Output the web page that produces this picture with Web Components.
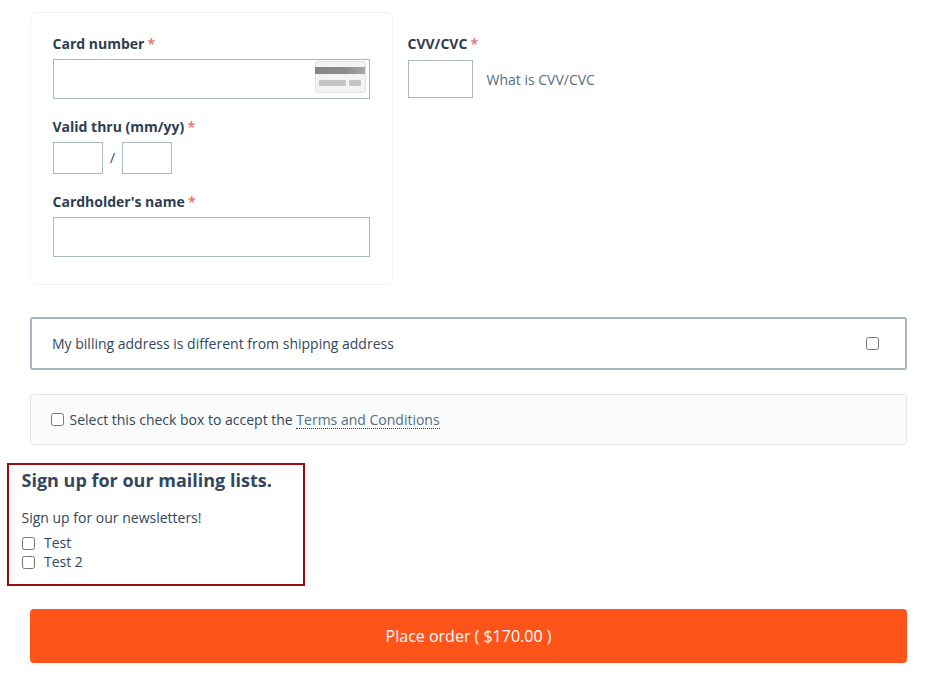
<!DOCTYPE html>
<html>
<head>
<meta charset="utf-8">
<title>Checkout</title>
<style>
  html, body { margin: 0; background: #fff; }
  body { font: 14px/20px "Open Sans", sans-serif; color: #33475b; overflow: hidden; height: 675px; }
  checkout-form { display: block; }
</style>
</head>
<body>
<checkout-form>
  <payment-fields></payment-fields>
  <billing-toggle>My billing address is different from shipping address</billing-toggle>
  <terms-box>Select this check box to accept the <a>Terms and Conditions</a></terms-box>
  <mailing-lists></mailing-lists>
  <order-button>Place order ( $170.00 )</order-button>
</checkout-form>

<script>
// small helper so every element has the same shadow setup
function shadow(el, html) {
	el.attachShadow({ mode: 'open' }).innerHTML = html;
}

class CheckoutForm extends HTMLElement {
	connectedCallback() {
		shadow(this, `
      <style>
        :host { display: block; width: 877px; padding: 12px 0 0 30px; }
      </style>
      <slot></slot>
    `);
	}
}

class FieldLabel extends HTMLElement {
	connectedCallback() {
		shadow(this, `
      <style>
        :host { display: block; font-size: 14px; line-height: 20px; font-weight: 700; color: #2f3d4d; margin-left: -0.5px; }
        span { color: #e2716a; font-weight: 600; margin-left: -0.5px; }
      </style>
      <slot></slot> <span>*</span>
    `);
	}
}

class PaymentFields extends HTMLElement {
	connectedCallback() {
		shadow(this, `
      <style>
        :host { display: flex; align-items: flex-start; }
        .card {
          box-sizing: border-box; width: 363px; height: 273px; padding: 21px 22px 0;
          border: 1px solid #f0f2f4; border-radius: 6px; background: #fff;
        }
        .side { margin: 22px 0 0 15px; }
        .box { display: block; box-sizing: border-box; border: 1px solid #aab8c2; background: #fff; }
        .number { width: 317px; height: 40px; margin-top: 5px; padding: 1px 3px 0 0; display: flex; justify-content: flex-end; }
        .name { width: 317px; height: 40px; margin-top: 5px; }
        .gap { height: 18px; }
        .dates { display: flex; align-items: center; margin-top: 5px; }
        .dates .box { width: 50px; height: 32px; }
        .dates i { font-style: normal; width: 19px; text-align: center; font-size: 14px; }
        .cvv { display: flex; align-items: center; margin-top: 6px; }
        .cvv .box { width: 65px; height: 38px; }
        .cvv span { margin: 2px 0 0 13.5px; font-size: 14px; color: #5a6d7c; }
        svg { display: block; }
      </style>
      <div class="card">
        <field-label>Card number</field-label>
        <div class="box number">
          <svg width="51" height="32" viewBox="0 0 51 32">
            <defs>
              <linearGradient id="stripe"><stop offset="0" stop-color="#858585"/><stop offset=".6" stop-color="#8c8c8c"/><stop offset="1" stop-color="#a8a8a8"/></linearGradient>
            </defs>
            <rect x=".5" y=".5" width="50" height="31" rx="2.5" fill="#f3f3f3" stroke="#e2e2e2"/>
            <rect x="0" y="6" width="50" height="7" fill="url(#stripe)"/>
            <rect x="4" y="19" width="27" height="6" fill="#c6c6c6"/>
            <rect x="34" y="19" width="12" height="6" fill="#c6c6c6"/>
          </svg>
        </div>
        <div class="gap"></div>
        <field-label>Valid thru (mm/yy)</field-label>
        <div class="dates">
          <div class="box"></div><i>/</i><div class="box"></div>
        </div>
        <div class="gap"></div>
        <field-label>Cardholder's name</field-label>
        <div class="box name"></div>
      </div>
      <div class="side">
        <field-label>CVV/CVC</field-label>
        <div class="cvv"><div class="box"></div><span>What is CVV/CVC</span></div>
      </div>
    `);
	}
}

class BillingToggle extends HTMLElement {
	connectedCallback() {
		shadow(this, `
      <style>
        :host {
          display: flex; align-items: center; justify-content: space-between; box-sizing: border-box;
          height: 53px; margin-top: 32px; padding: 0 26px 0 20px;
          border: 2px solid #a5b4c3; border-radius: 3px; font-size: 14px; color: #33475b;
        }
        input { width: 13px; height: 13px; margin: 0; }
      </style>
      <span><slot></slot></span>
      <input type="checkbox">
    `);
	}
}

class TermsBox extends HTMLElement {
	connectedCallback() {
		shadow(this, `
      <style>
        :host {
          display: flex; align-items: center; box-sizing: border-box;
          height: 51px; margin-top: 24px; padding: 0 20px;
          background: #fbfbfb; border: 1px solid #e3e7ec; border-radius: 3px; font-size: 14px; color: #33475b;
        }
        input { width: 13px; height: 13px; margin: 0 5.5px 0 0; }
        ::slotted(a) { color: #516f85; border-bottom: 1px dotted #33475b; line-height: 17px; display: inline-block; }
      </style>
      <input type="checkbox">
      <span><slot></slot></span>
    `);
	}
}

class MailingLists extends HTMLElement {
	connectedCallback() {
		shadow(this, `
      <style>
        :host {
          display: block; box-sizing: border-box; width: 298px; height: 123px;
          margin: 18px 0 0 -23px; padding: 0 0 0 12.5px;
          border: 2px solid #990f0f; color: #33475b;
        }
        h3 { margin: 0; padding-top: 3px; font-size: 18px; line-height: 24px; font-weight: 700; color: #33475b; }
        p { margin: 16px 0 5px; font-size: 14px; line-height: 20px; }
        label { display: flex; align-items: center; height: 19px; font-size: 14px; }
        input { width: 13px; height: 13px; margin: 1px 9.5px 0 0; }
      </style>
      <h3>Sign up for our mailing lists.</h3>
      <p>Sign up for our newsletters!</p>
      <label><input type="checkbox">Test</label>
      <label><input type="checkbox">Test 2</label>
    `);
	}
}

class OrderButton extends HTMLElement {
	connectedCallback() {
		shadow(this, `
      <style>
        :host {
          display: flex; align-items: center; justify-content: center;
          height: 54px; margin-top: 23px;
          background: #ff5419; border-radius: 4px; color: #fff; font-size: 16px;
        }
      </style>
      <slot></slot>
    `);
	}
}

customElements.define('checkout-form', CheckoutForm);
customElements.define('field-label', FieldLabel);
customElements.define('payment-fields', PaymentFields);
customElements.define('billing-toggle', BillingToggle);
customElements.define('terms-box', TermsBox);
customElements.define('mailing-lists', MailingLists);
customElements.define('order-button', OrderButton);
</script>
</body>
</html>
